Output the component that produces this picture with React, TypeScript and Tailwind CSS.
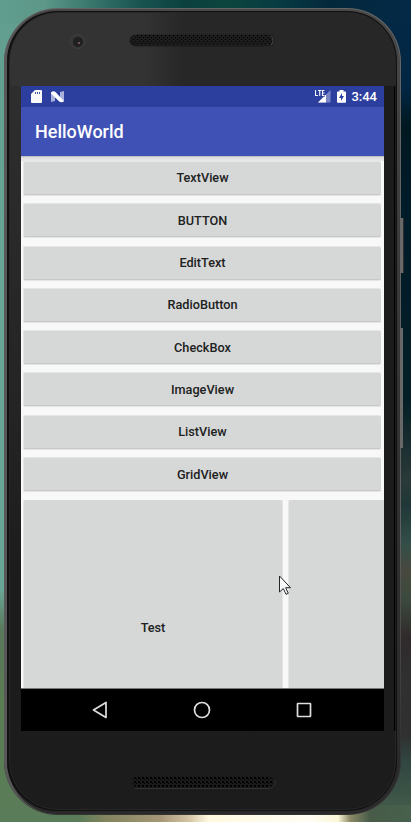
import React from "react";

const items = ["TextView", "BUTTON", "EditText", "RadioButton", "CheckBox", "ImageView", "ListView", "GridView"];

function Speaker({ bottom = false }: { bottom?: boolean }) {
  return (
    <svg width="146" height="13" viewBox="0 0 146 13" className="block">
      <defs>
        <pattern id={bottom ? "holesB" : "holesT"} width="4" height="4" patternUnits="userSpaceOnUse">
          <rect x="0" y="1" width={bottom ? 2 : 1} height={bottom ? 2 : 1} fill="#000" />
          <rect x="2" y="3" width="1" height="1" fill="#000" />
        </pattern>
      </defs>
      <rect x="0.5" y="0.5" width="145" height="12" rx="6" fill={bottom ? "#1a1a1a" : "#1c1c1c"} />
      {bottom && <path d="M5 12.5H139a6 6 0 0 0 6-6V4" fill="none" stroke="#303030" />}
      {!bottom && <path d="M142 2a6 6 0 0 1 0 9" fill="none" stroke="#484848" />}
      <rect x="2" y="1" width="141" height="10" rx="5" fill={bottom ? "url(#holesB)" : "url(#holesT)"} />
    </svg>
  );
}

function StatusBar() {
  return (
    <div className="flex h-[21px] items-center bg-[#2d3f9e] pl-[10px] pr-[7px] text-white">
      <svg width="11" height="13" viewBox="0 0 11 13" className="shrink-0">
        <path d="M4 0H10a1 1 0 0 1 1 1V12a1 1 0 0 1-1 1H1a1 1 0 0 1-1-1V4Z" fill="#fafafa" />
        <path d="M4.5 2v2M6.5 2v2M8.5 2v2" stroke="#4b59aa" strokeWidth="1" />
      </svg>
      <svg width="13" height="12" viewBox="0 0 13 12" className="ml-[9px] shrink-0">
        <path d="M0 1L4 3V10L0 11ZM9 1L13 0V11L9 9Z" fill="#aab2dc" />
        <path d="M0 1.5Q2 -.5 4.500 1L12.800 10Q11 12 8.500 10.800L0 2.500Z" fill="#fff" />
      </svg>
      <div className="grow" />
      <svg width="16" height="13" viewBox="0 0 16 13" className="shrink-0">
        <path d="M15.5 0V12.5H3Z" fill="#7986c5" />
        <path d="M11 4.5V12.5H3Z" fill="#fff" />
        <path d="M0 0H10V6.500H0Z" fill="#2d3f9e" />
        <path d="M.5 0V5.5H3M3 .5H6.500M4.700 .5V6M9.500 .5H7.500V5.5H9.500M7.500 3H9.500" fill="none" stroke="#f2f4ff" strokeWidth="1.100" />
      </svg>
      <svg width="9" height="13" viewBox="0 0 9 13" className="ml-[6px] shrink-0">
        <path d="M2.5 0H6.500V1.5H8.200a.8.8 0 0 1 .8.8V12a.8.8 0 0 1-.8.8H.8a.8.8 0 0 1-.8-.8V2.3A.8.8 0 0 1 .8 1.500H2.500Z" fill="#fff" />
        <path d="M5 3L2 8H4V11L7 6H5Z" fill="#2d3f9e" />
      </svg>
      <span className="ml-[5px] text-[13px] leading-[21px] font-medium">3:44</span>
    </div>
  );
}

function Cell({ className, children }: { className: string; children?: React.ReactNode }) {
  return (
    <div className={"border-[#e4e5e5] bg-[#d6d8d7] text-[12.7px] font-medium text-[#202121] " + className}>{children}</div>
  );
}

export default function App() {
  return (
    <div className="relative h-[822px] w-[411px] overflow-hidden font-[Roboto,'Liberation_Sans',sans-serif] [background:linear-gradient(90deg,#5a7c58_0,#5a7c58_78px,#81845d_105px,#a59776_160px,#d7c6a5_190px,#fff9df_208px,#fffdf3_310px,#fbf7d9_338px,#8c8b67_350px,#475b48_370px,#46614d_411px)_0_805px/411px_17px_no-repeat,linear-gradient(90deg,#629e8f_0,#5c9788_45px,#39776d_90px,#195451_140px,#0b403f_185px,#0c453e_230px,#073b43_280px,#04283b_330px,#032947_411px)_0_0/411px_24px_no-repeat,linear-gradient(180deg,#629e8f_0,#69a696_280px,#69a696_590px,#58785a_630px,#5a7c52_700px,#5a7c58_822px)_0_0/100px_822px_no-repeat,linear-gradient(180deg,#032947_0,#022642_90px,#001820_125px,#001b29_210px,#041f25_400px,#2b3939_480px,#203737_505px,#344f48_545px,#48483f_570px,#3c4a3e_598px,#302a2b_638px,#303030_675px,#303030_735px,#304540_760px,#46614d_822px)_311px_0/100px_822px_no-repeat]">
      <div className="absolute left-[400px] top-[218px] h-[55px] w-[4px] border-r border-[#303030] bg-[#686868]" />
      <div className="absolute left-[400px] top-[328px] h-[120px] w-[3px] bg-[#686868]" />
      <div className="px-[4px] pt-[8px]">
        <div className="h-[807px] w-[397px] rounded-[54px] bg-linear-to-b from-[#656565] from-0% via-[#606060] via-65% to-[#343434] to-90% p-px pl-0">
          <div className="h-full rounded-[53px] border-l-[3px] border-[#585858] bg-linear-to-b from-[#484848] via-[#333] to-[#292929] pt-[2px] pb-[3px] pr-[3px]">
            <div className="h-full rounded-[50px] bg-[#111] p-px pl-[2px]">
              <div className="flex h-full flex-col rounded-[49px] border border-[#272727] bg-linear-to-b from-[#303030] via-[#242424] via-50% to-[#1c1c1c] to-70% pl-[11px]">
                <div className="-ml-[11px] h-[73px] shrink-0 rounded-t-[48px] bg-linear-to-r from-[#333] from-35% to-[#272727] to-45% pl-[60px] pt-[21px]">
                  <div className="flex items-start">
                    <div className="flex size-[15px] items-center justify-center rounded-full border border-[#414141]">
                      <div className="flex size-[10px] items-center justify-center rounded-full bg-[#202020] pl-[3px] pt-[2px]">
                        <div className="size-[2px] bg-[#74545c]" />
                      </div>
                    </div>
                    <div className="ml-[44px]"><Speaker /></div>
                  </div>
                </div>
                <div className="flex w-[375px] bg-linear-to-r from-transparent from-50% to-[#1c1c1c] to-50%">
                  <main className="h-[645px] w-[363px] overflow-hidden bg-black">
                    <StatusBar />
                    <header className="h-[49px] bg-[#3f51b5] pl-[14px] text-[18px] leading-[50px] font-medium text-white">HelloWorld</header>
                    <div className="h-[533px] overflow-hidden border-b border-[#777] bg-[#f8f8f8]">
                      <div className="h-[5px] bg-linear-to-b from-[#aaa] via-[#ddd] via-25% to-[#e9e9e9]" />
                      <div className="flex flex-col gap-[8.3px] pl-[2px] pr-[3px]">
                        {items.map((name) => (
                          <Cell key={name} className="flex h-[34px] items-center justify-center rounded-[2px] border-t border-b border-l border-b-[#c7c8c8] shadow-[0_1px_0_#e4e4e4]">
                            {name}
                          </Cell>
                        ))}
                      </div>
                      <div className="mt-[8.700px] flex w-[470px] gap-[5px] pl-[2px]">
                        <Cell className="flex h-[255px] w-[260px] items-center justify-center rounded-[2px] border-x">Test</Cell>
                        <Cell className="h-[255px] w-[190px] rounded-[2px] border-l" />
                      </div>
                    </div>
                    <nav className="flex h-[42px] items-center justify-between pr-[72px] pl-[70px]">
                      <svg width="16" height="18" viewBox="0 0 16 18"><path d="M15 1.500V16.500L2.500 9Z" fill="none" stroke="#dedede" strokeWidth="1.700" strokeLinejoin="round" /></svg>
                      <svg width="18" height="18" viewBox="0 0 18 18"><circle cx="9" cy="9" r="7.500" fill="none" stroke="#dedede" strokeWidth="1.700" /></svg>
                      <svg width="16" height="16" viewBox="0 0 16 16"><rect x="1.500" y="1.500" width="13" height="13" rx=".5" fill="none" stroke="#dedede" strokeWidth="1.700" /></svg>
                    </nav>
                  </main>
                  <div className="ml-[10px] w-px bg-black" />
                </div>
                <div className="ml-[109px] mt-[45px]"><Speaker bottom /></div>
              </div>
            </div>
          </div>
        </div>
      </div>
      <svg className="absolute left-[278px] top-[575px]" width="14" height="21" viewBox="0 0 14 21">
        <path d="M1.500 1V17L5.300 13.500L8 19.300L10.300 18.300L7.700 12.700H12.500Z" fill="#fafafa" stroke="#22262b" strokeWidth="1" />
      </svg>
    </div>
  );
}
